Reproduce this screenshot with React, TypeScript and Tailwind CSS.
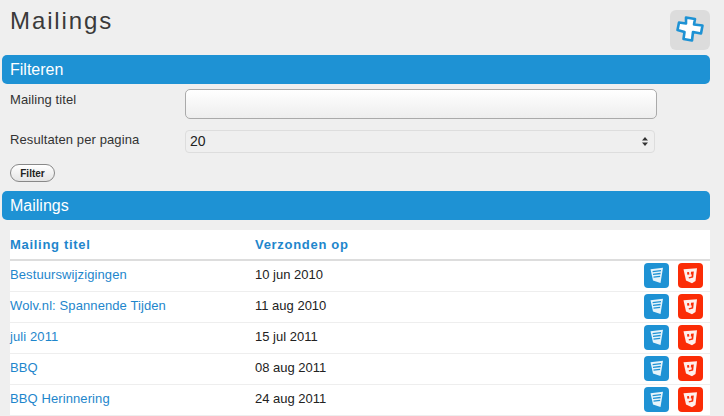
const mailings = [
  { title: "Bestuurswijzigingen", date: "10 jun 2010" },
  { title: "Wolv.nl: Spannende Tijden", date: "11 aug 2010" },
  { title: "juli 2011", date: "15 jul 2011" },
  { title: "BBQ", date: "08 aug 2011" },
  { title: "BBQ Herinnering", date: "24 aug 2011" },
];

function CssIcon() {
  return (
    <div className="h-[25px] w-[25px] rounded-[4px] bg-[#1e92d4]">
      <svg width="25" height="25" viewBox="0 0 25 25">
        {/* tilted shield */}
        <path d="M6.5 6.3L19 4.8L16.5 20L9 17.6Z" fill="#e6f4fb" />
        <path
          d="M8.6 8.6L17 7.6M9 11.4L16.6 10.5M9.5 14.2L16.1 13.4"
          stroke="#1e92d4"
          strokeWidth="1.3"
          fill="none"
        />
      </svg>
    </div>
  );
}

function HtmlIcon() {
  return (
    <div className="h-[25px] w-[25px] rounded-[4px] bg-[#fb2c06]">
      <svg width="25" height="25" viewBox="0 0 25 25">
        <path d="M5.5 6.3L19 5.2L17.5 18L14 20.2L8 17.6Z" fill="#fff0ec" />
        <path d="M9 9.2L11 9L11.4 11.6L9.4 11.8Z" fill="#fb2c06" />
        <path d="M13 8.8L15.8 8.5L15.2 14.6L11 15.6L10.6 14.2L13.6 13.4L13.8 11.5L12.8 11.5Z" fill="#fb2c06" />
      </svg>
    </div>
  );
}

function SectionBar({ title }: { title: string }) {
  return (
    <div className="ml-[2px] mr-[14px] flex h-[29px] items-center rounded-[5px] bg-[#1e92d4] pl-2 text-[16px] text-white">
      {title}
    </div>
  );
}

export default function App() {
  return (
    <div className="h-[416px] w-[724px] overflow-hidden bg-[#efefef] font-['Liberation_Sans',Arial,sans-serif] text-[#333333]">
      {/* Page title + add button */}
      <div className="flex h-[55px] items-start justify-between pr-[14px]">
        <h1 className="pl-[10px] pt-[6px] text-[24px] leading-[30px] tracking-[1.9px] text-[#3a3a3a]">Mailings</h1>
        <div className="mt-[10px] h-[40px] w-[40px] rounded-[6px] bg-[#dcdcdc]">
          <svg width="40" height="40" viewBox="0 0 40 40">
            <path
              d="M16 7.5L25 9L24 14.5L32.5 15.5L31 23.5L23 22L22 30.5L13.5 29L14.5 22L7.5 20L9 12.5L16 13.5Z"
              fill="#ffffff"
              stroke="#1e92d4"
              strokeWidth="2.6"
              strokeLinejoin="round"
            />
          </svg>
        </div>
      </div>

      <SectionBar title="Filteren" />

      {/* Filter form */}
      <div className="pl-[10px]">
        <div className="flex h-[46px] items-start pt-[5px]">
          <label className="w-[175px] pt-[3px] text-[13px] leading-[15px] tracking-[0.1px]">Mailing titel</label>
          <input className="h-[30px] w-[472px] rounded-[5px] border border-[#aaaaaa] bg-gradient-to-b from-white to-[#eeeeee]" />
        </div>
        <div className="flex h-[34px] items-start">
          <label className="w-[175px] pt-[2px] text-[13px] leading-[15px] tracking-[0.1px]">Resultaten per pagina</label>
          <div className="flex h-[23px] w-[470px] items-center justify-between rounded-[4px] border border-[#dddddd] pl-[4px] pr-[6px] text-[14px] font-medium text-[#222222]">
            <span>20</span>
            <svg width="6" height="9" viewBox="0 0 6 9">
              <path d="M3 0L6 3.5H0ZM3 9L0 5.5H6Z" fill="#333333" />
            </svg>
          </div>
        </div>
        <button className="flex h-[18px] w-[45px] items-center justify-center rounded-full border border-[#888888] bg-gradient-to-b from-white to-[#e4e4e4] text-[10px] font-bold text-[#222222]">
          Filter
        </button>
      </div>

      <div className="h-[9px]" />
      <SectionBar title="Mailings" />

      {/* Results table */}
      <div className="ml-[10px] mr-[14px] mt-[10px] bg-white text-[13px]">
        <div className="flex h-[31px] items-center border-b-2 border-[#dddddd] font-bold tracking-[0.7px] text-[#1e86cc]">
          <div className="w-[245px]">Mailing titel</div>
          <div>Verzonden op</div>
        </div>
        {mailings.map((m) => (
          <div key={m.title} className="flex h-[31px] items-center border-b border-[#eeeeee] pb-[1px]">
            <a className="mb-[2px] w-[245px] tracking-[0.1px] text-[#1e86cc]">{m.title}</a>
            <div className="mb-[2px] flex-1 text-[#222222]">{m.date}</div>
            <div className="flex gap-[9px] pr-[7px]">
              <CssIcon />
              <HtmlIcon />
            </div>
          </div>
        ))}
      </div>
    </div>
  );
}
